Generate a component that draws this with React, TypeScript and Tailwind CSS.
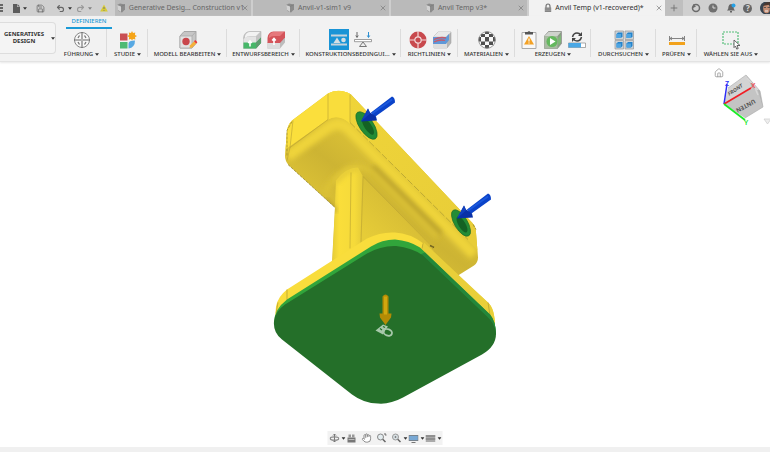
import type { ReactNode } from "react";
import { X, Plus, House, Hand, Undo2, Redo2, Save } from "lucide-react";

function Caret() {
  return (
    <svg viewBox="0 0 6 4" className="h-[3px] w-1 shrink-0" fill="#333" aria-hidden="true">
      <path d="M0 0h6L3 4z" />
    </svg>
  );
}

function CubeSmall() {
  return (
    <svg viewBox="0 0 10 10" className="size-2.5 shrink-0" aria-hidden="true">
      <path d="M1 2l3-1.500 5 1v5L6 9.500 2.500 8z" fill="#8b8b8b" />
      <path d="M1 2l4 1.500v5.500L2 7z" fill="#d2d2d2" />
      <path d="M5 3.500l4-2" stroke="#777" strokeWidth=".6" />
    </svg>
  );
}

function LockSmall() {
  return (
    <svg viewBox="0 0 8 10" className="h-2.5 w-2 shrink-0" fill="none" aria-hidden="true">
      <path d="M2 5V3.500q0-2.500 2-2.500t2 2.500V5" stroke="#777" strokeWidth="1.200" />
      <path d="M.8 4.500h6.400v4.500H.8z" fill="#858585" />
      <path d="M1 6h6M1 7.500h6" stroke="#a5a5a5" strokeWidth=".5" />
    </svg>
  );
}

function Tab({ title, active = false }: { title: string; active?: boolean }) {
  return (
    <div
      className={
        active
          ? "flex min-w-0 flex-1 items-center bg-[#f2f2f2] pr-0.5 pl-1 text-[#303030]"
          : "flex min-w-0 flex-1 items-center border-r-2 border-[#cecece] bg-[#bababa] pr-0.5 pl-1 text-[#666]"
      }
    >
      <button className="flex min-w-0 flex-1 items-center justify-center gap-[3px]">
        {active ? <LockSmall /> : <CubeSmall />}
        <span className="whitespace-nowrap">{title}</span>
      </button>
      <button aria-label={"Schließen: " + title}>
        <X className="size-2 text-[#777]" strokeWidth={2} />
      </button>
    </div>
  );
}

function Ico({ children }: { children: ReactNode }) {
  return (
    <svg viewBox="0 0 20 20" className="size-5 shrink-0" fill="none" aria-hidden="true">
      {children}
    </svg>
  );
}

function GuideIcon() {
  return (
    <Ico>
      <circle cx="10" cy="10" r="7.500" fill="#f8f8f8" stroke="#888" />
      <path d="M10 2v16M2 10h16" stroke="#777" strokeWidth="1.600" />
      <path d="M6 8l1.500-2.500M14 8l-1.500-2.500M6 12l1.500 2.500M14 12l-1.500 2.500" stroke="#777" strokeWidth="1.300" />
      <path d="M10 3v14M3 10h14" stroke="#fff" strokeWidth=".5" />
    </Ico>
  );
}

function StudyIcon() {
  return (
    <Ico>
      <path d="M2 3.500h7.500v7H2z" fill="#c94f53" />
      <path d="M2 12h7.500v6.500H2z" fill="#4fba73" />
      <path d="M10.500 18.500v-5q0-3 6.500-3 0 7-6.500 8z" fill="#58a9e3" />
      <path d="M14 1l1 2 2.200-.6L17 5l2 1-2 1.200.4 2.200L15 9l-1 1.500L13 9l-2.200.4.4-2.200-2-1.200 2-1-.4-2.600L13 3z" fill="#f5a417" />
    </Ico>
  );
}

function EditModelIcon() {
  return (
    <Ico>
      <path d="M2 6l4-4.500h12v12l-4 4.500H2z" fill="#c6c6c6" stroke="#999" strokeWidth=".8" />
      <path d="M2 6h12v12H2z" fill="#e2e2e2" stroke="#aaa" strokeWidth=".8" />
      <path d="M14 6l4-4.500" stroke="#aaa" strokeWidth=".8" />
      <circle cx="8" cy="11.500" r="3.700" fill="#c9474c" />
      <path d="M11.500 18l.6-2.800 4-4 2.200 2.200-4 4z" fill="#f4b13b" />
      <path d="M16 11.200l1.200-1.200 2.200 2.200-1.200 1.200z" fill="#e33" />
    </Ico>
  );
}

function PreserveIcon() {
  return (
    <Ico>
      <path d="M1.500 8q.5-6 6-6.500H19v11L14 18.500H1.500z" fill="#c4c4c4" stroke="#aaa" strokeWidth=".5" />
      <path d="M1.500 9q3-3 6-2.500H14V13H1.500z" fill="#e4e4e4" />
      <path d="M3 6q1.500-4 5-4h10L14 6H8q-3 0-5 2z" fill="#f2f2f2" />
      <path d="M1.500 12.500H14l5-5v5.500l-5 5.500H1.500z" fill="#47b769" />
      <path d="M14 12.500l5-5V13l-5 5.500z" fill="#5f9c70" />
      <path d="M8 16.500v-5M6.200 13L8 11l1.800 2" stroke="#fff" strokeWidth="1.600" />
    </Ico>
  );
}

function ObstacleIcon() {
  return (
    <Ico>
      <path d="M1.500 12H14l5-5v5.500l-5 6H1.500z" fill="#bdbdbd" />
      <path d="M1.500 12H14v6.500H1.500z" fill="#dcdcdc" />
      <path d="M1.500 13V8q.5-6 6-6.500H19v6L14 13z" fill="#d4545a" />
      <path d="M3 6q1.500-4 5-4h10L14 6H8q-3 0-5 2z" fill="#e6787c" />
      <path d="M8 15V8.500M6.200 10.500L8 8.500l1.800 2" stroke="#fff" strokeWidth="1.600" />
    </Ico>
  );
}

function ConstraintIcon() {
  return (
    <span className="flex h-[21px] items-center bg-[#1994d6]">
      <Ico>
        <path d="M2 5.500h16M2 14.500h16" stroke="#c6d3db" strokeWidth="2.200" />
        <path d="M4.500 13L8 7.500l3.500 5.500z" fill="#d5dfe4" />
        <circle cx="14.500" cy="10" r="2.300" fill="#d5dfe4" />
      </Ico>
    </span>
  );
}

function LoadIcon() {
  return (
    <Ico>
      <path d="M1.500 9.500h17v2.200h-17z" fill="#fff" stroke="#888" strokeWidth=".8" />
      <path d="M10 12l-3.500 4.500h7z" fill="#eee" stroke="#777" />
      <path d="M4 2v5M2.800 5.500L4 7.500l1.200-2" stroke="#666" />
      <path d="M15.500 2v5M14.300 5.500l1.200 2 1.200-2" stroke="#2b8fd2" />
    </Ico>
  );
}

function TargetIcon() {
  return (
    <Ico>
      <circle cx="10" cy="10" r="8.500" fill="#c8494d" />
      <path d="M10 1v6M10 13v6M1 10h6M13 10h6" stroke="#f3dada" strokeWidth="1.200" />
      <circle cx="10" cy="10" r="3.200" fill="#c8494d" stroke="#f3dada" strokeWidth="1.200" />
    </Ico>
  );
}

function MethodIcon() {
  return (
    <Ico>
      <path d="M2 6l4-4h13v11l-4 5H2z" fill="#b5b5b5" stroke="#999" strokeWidth=".5" />
      <path d="M2 6h13v12H2z" fill="#dedede" />
      <path d="M2 6l4-4h13l-4 4z" fill="#e9e9e9" />
      <path d="M1 7h13l3-3v6l-3 4H1z" fill="#5f98d8" />
      <path d="M2 9.500q6-3 12-1.500M2 12q6-3 11-1.500" stroke="#c65a6a" strokeWidth="1.300" />
    </Ico>
  );
}

function MaterialIcon() {
  return (
    <Ico>
      <clipPath id="ball"><circle cx="10" cy="10" r="8.500" /></clipPath>
      <circle cx="10" cy="10" r="8.500" fill="#f7f7f7" />
      <g clipPath="url(#ball)" fill="#505050">
        <path d="M8 0h4v4H8zM4 4h4v3H4zM12 4h4v3h-4zM0 7h4v4.500H0zM8 7h4v4.500H8zM16 7h4v4.500h-4zM4 11.500h4V15H4zM12 11.500h4V15h-4zM8 15h4v4H8zM0 15h4v4H0zM16 15h4v4h-4zM0 1h4v3H0zM16 1h4v3h-4z" />
      </g>
      <circle cx="10" cy="10" r="8.300" stroke="#888" strokeWidth=".8" />
    </Ico>
  );
}

function CheckIcon() {
  return (
    <Ico>
      <path d="M3 2.500h14v16H3z" fill="#f8f8f8" stroke="#aaa" />
      <path d="M6 2h2.500L10 1l1.500 1H14v2.500H6z" fill="#555" />
      <path d="M10 6l5 8.500H5z" fill="#f3a125" />
      <path d="M10 8.500v3M10 12.500v1" stroke="#fff" strokeWidth="1.200" />
    </Ico>
  );
}

function GenerateIcon() {
  return (
    <Ico>
      <path d="M1.500 6l4-4.500h13v12l-4 5h-13z" fill="#8a9c84" stroke="#858585" strokeWidth=".6" />
      <path d="M1.500 6h13v12.500h-13z" fill="#a9bba2" />
      <path d="M5.500 2h12.500l-3.500 4h-13z" fill="#cfd3cd" />
      <path d="M15 8l3-3v7l-3 4z" fill="#7fb878" />
      <circle cx="9" cy="11.500" r="5.500" fill="#64b85e" />
      <path d="M7 8l5.500 3.500L7 15z" fill="#fff" />
    </Ico>
  );
}

function StatusIcon() {
  return (
    <Ico>
      <path d="M5.500 7q1-4 4.500-4 2.500 0 3.500 2M14.500 7q-1 4-4.500 4-2.500 0-3.500-2" stroke="#444" strokeWidth="1.500" />
      <path d="M15 2v4h-4zM5 12V8h4z" fill="#444" />
      <path d="M1.500 13h17v4.500h-17z" fill="#fff" stroke="#888" strokeWidth=".7" />
      <path d="M1.500 13H14v4.500H1.500z" fill="#4ba8e5" />
    </Ico>
  );
}

function ExploreIcon() {
  return (
    <Ico>
      {[1, 11].map((x) =>
        [1, 10.5].map((y) => (
          <g key={x + "-" + y} transform={"translate(" + x + " " + y + ")"}>
            <path d="M0 0h8.500v8.500H0z" fill="#ccd2d6" stroke="#999" strokeWidth=".7" />
            <path d="M1.500 3L3 1.500h4.500v4L6 7H1.500z" fill="#2584cc" />
            <path d="M1.500 3H6v4H1.500z" fill="#4ea5e2" />
          </g>
        )),
      )}
    </Ico>
  );
}

function MeasureIcon() {
  return (
    <Ico>
      <path d="M2.500 6v5M17.500 6v5M3 8.500h14M5 7L3 8.500 5 10M15 7l2 1.500L15 10" stroke="#777" strokeWidth=".9" />
      <path d="M2 12h16v3H2z" fill="#f2a21c" />
    </Ico>
  );
}

function SelectIcon() {
  return (
    <Ico>
      <path d="M2 2h15v12H2z" stroke="#55bd79" strokeWidth="1.200" strokeDasharray="2 1" />
      <path d="M13 10l6 5.500h-3l1.200 3-1.500.6-1.200-3-1.500 1.500z" fill="#fff" stroke="#555" strokeWidth=".9" />
    </Ico>
  );
}

const groups: { label: string; icons: ReactNode[] }[] = [
  { label: "FÜHRUNG", icons: [<GuideIcon />] },
  { label: "STUDIE", icons: [<StudyIcon />] },
  { label: "MODELL BEARBEITEN", icons: [<EditModelIcon />] },
  { label: "ENTWURFSBEREICH", icons: [<PreserveIcon />, <ObstacleIcon />] },
  { label: "KONSTRUKTIONSBEDINGUI...", icons: [<ConstraintIcon />, <LoadIcon />] },
  { label: "RICHTLINIEN", icons: [<TargetIcon />, <MethodIcon />] },
  { label: "MATERIALIEN", icons: [<MaterialIcon />] },
  { label: "ERZEUGEN", icons: [<CheckIcon />, <GenerateIcon />, <StatusIcon />] },
  { label: "DURCHSUCHEN", icons: [<ExploreIcon />] },
  { label: "PRÜFEN", icons: [<MeasureIcon />] },
  { label: "WÄHLEN SIE AUS", icons: [<SelectIcon />] },
];

function TitleBar() {
  return (
    <header className="flex h-4 bg-[#d0d0d0] text-[7px] leading-4">
      <div className="flex w-[115px] shrink-0 items-center text-[#666]">
        <button aria-label="Datengruppe" className="w-3">
          <svg viewBox="0 0 4 8" className="h-2 w-1" fill="#666"><path d="M0 0h3v2H0zM0 3h3v2H0zM0 6h3v2H0z" /></svg>
        </button>
        <button aria-label="Datei" className="flex w-6 items-center gap-[3px]">
          <svg viewBox="0 0 8 9" className="h-[9px] w-2" fill="#5c5c5c"><path d="M1 0h4v3h3v6H1z" /><path d="M5.500 0L8 2.500H5.500z" /></svg>
          <Caret />
        </button>
        <button aria-label="Speichern" className="w-5"><Save className="size-[9px]" strokeWidth={2} /></button>
        <button aria-label="Rückgängig" className="flex w-5 items-center gap-[3px]"><Undo2 className="size-[9px]" strokeWidth={3} /><Caret /></button>
        <button aria-label="Wiederholen" className="flex w-6 items-center gap-[3px] opacity-50"><Redo2 className="size-[9px]" strokeWidth={3} /><Caret /></button>
        <button aria-label="Warnung">
          <svg viewBox="0 0 8 8" className="size-2"><path d="M4 .5l3.800 7H.2z" fill="#d8cb35" /><path d="M4 3v2M4 6v.8" stroke="#777" /></svg>
        </button>
      </div>
      <nav className="flex min-w-0 flex-1">
        <Tab title="Generative Desig... Construction v1" />
        <Tab title="Anvil-v1-sim1 v9" />
        <Tab title="Anvil Temp v3*" />
        <Tab title="Anvil Temp (v1-recovered)*" active />
      </nav>
      <div className="flex w-[105px] shrink-0 items-center justify-between text-[#6d6d6d]">
        <button aria-label="Neuer Tab" className="flex h-4 w-[18px] items-center justify-center bg-[#bfbfbf]"><Plus className="size-2.5" strokeWidth={2} /></button>
        <button aria-label="Erweiterungen">
          <svg viewBox="0 0 10 10" className="size-2.5" fill="none"><circle cx="5" cy="5" r="3.500" stroke="#6b6b6b" strokeWidth="1.500" /><path d="M2 1l3 2.500L2 5z" fill="#6b6b6b" /></svg>
        </button>
        <button aria-label="Auftragsstatus">
          <svg viewBox="0 0 10 10" className="size-2.5"><circle cx="5" cy="5" r="4.500" fill="#707070" /><path d="M5 2.500V5h2.500" stroke="#ddd" fill="none" /></svg>
        </button>
        <button aria-label="Benachrichtigungen">
          <svg viewBox="0 0 10 10" className="size-2.5"><path d="M1 7.500q1.500-1 1.500-4Q3 1 5 1t2.500 2.500q0 3 1.500 4zM4 8h2v1.500H4z" fill="#656565" /><circle cx="7.500" cy="2.500" r="2" fill="#25a1e6" /></svg>
        </button>
        <button aria-label="Hilfe" className="flex size-[9px] items-center justify-center rounded-full bg-[#666] text-[8px] leading-none font-bold text-[#ddd]">?</button>
        <button aria-label="Profil">
          <svg viewBox="0 0 10 12" className="h-3 w-2.5"><path d="M4 0h6v12H4Q0 10 0 6t4-6z" fill="#384450" /><ellipse cx="6.500" cy="6.500" rx="3.300" ry="4.800" fill="#c58e74" /><path d="M3 4q1-4 7-4v2.500z" fill="#4a3830" /><path d="M4 5.500h2M7.500 5.500H10" stroke="#444" strokeWidth=".8" /><path d="M5 9h3" stroke="#eee" /></svg>
        </button>
      </div>
    </header>
  );
}

function Ribbon() {
  return (
    <div className="flex h-[46px] border-b border-[#e3e3e3] bg-[#f2f2f2] text-[#333] shadow-[0_1px_2px_#e8e8e8]">
      <button className="mt-1.5 flex h-8 w-14 shrink-0 items-center justify-center gap-[3px] rounded-r-sm border border-l-0 border-[#ddd] bg-[#f4f4f4] text-[6px] leading-[7px] font-bold">
        <span>GENERATIVES DESIGN</span>
        <Caret />
      </button>
      <div className="flex min-w-0 flex-1 flex-col">
        <div className="flex h-[13px] shrink-0 pl-2.5">
          <button className="w-[46px] border-b-2 border-[#1b9ad6] text-[6px] leading-[11px] font-medium text-[#1b9ad6]">DEFINIEREN</button>
        </div>
        <div className="grid grid-cols-[51fr_41fr_79fr_73fr_101fr_57fr_57fr_76fr_65fr_41fr_68fr_5fr]">
          {groups.map((g, i) => (
            <div
              key={g.label}
              className={
                "flex min-w-0 flex-col items-center " + (i < groups.length - 1 ? "bg-[linear-gradient(#dcdcdc,#dcdcdc)] bg-[length:1px_28px] bg-right-top bg-no-repeat" : "")
              }
            >
              <div className="flex h-[21px] items-center gap-1">
                {g.icons.map((icon, k) => (
                  <button key={k} aria-label={g.label + " " + (k + 1)} className="block">{icon}</button>
                ))}
              </div>
              <button className="flex items-center gap-0.5 text-[6px] leading-[9px] font-medium whitespace-nowrap">
                {g.label}
                <Caret />
              </button>
            </div>
          ))}
        </div>
      </div>
    </div>
  );
}

function LoadArrow({ x, y }: { x: number; y: number }) {
  return (
    <g transform={"translate(" + x + " " + y + ")"}>
      <path d="M10-9L31-25Q34-24 34-19L13-4z" fill="#0b43c9" />
      <path d="M11-8L31-22" stroke="#1a58dc" strokeWidth="2" />
      <path d="M0 0L7-13l2 4 6 4 1 4z" fill="#0931a8" />
      <path d="M0 0L7-13l2 5z" fill="#1140bd" />
    </g>
  );
}

function Model() {
  return (
    <svg viewBox="0 62 770 384" className="absolute inset-0 size-full" role="img" aria-label="Anvil Modell">
      <defs>
        <linearGradient id="under" x1="300" y1="190" x2="350" y2="125" gradientUnits="userSpaceOnUse">
          <stop offset="0" stopColor="#dcc236" /><stop offset=".5" stopColor="#cdb433" /><stop offset="1" stopColor="#dcc236" />
        </linearGradient>
        <linearGradient id="post" x1="333" x2="364" y1="0" y2="0" gradientUnits="userSpaceOnUse">
          <stop offset="0" stopColor="#e8ce38" /><stop offset=".2" stopColor="#fade3a" /><stop offset=".7" stopColor="#f5da3a" /><stop offset="1" stopColor="#e2c838" />
        </linearGradient>
        <linearGradient id="side" x1="350" x2="475" y1="100" y2="240" gradientUnits="userSpaceOnUse">
          <stop offset="0" stopColor="#efd439" /><stop offset="1" stopColor="#e8cd38" />
        </linearGradient>
        <linearGradient id="web" x1="365" x2="400" y1="235" y2="200" gradientUnits="userSpaceOnUse">
          <stop offset="0" stopColor="#e6cc38" /><stop offset="1" stopColor="#d6bc35" />
        </linearGradient>
        <filter id="soft" x="-20%" y="-20%" width="140%" height="140%"><feGaussianBlur stdDeviation="2.500" /></filter>
        <clipPath id="body">
          <path d="M285 155L287 130Q288 124 292 120L328 93Q339 87 351 94L472 222Q476 226 476 232L478 257Q478 262 474 265L458 275 332 262 335 207 289 165Q285 161 285 155z" />
        </clipPath>
      </defs>
      <g clipPath="url(#body)">
        <path d="M280 85h205v195H280z" fill="url(#under)" />
        <path d="M287 156L328 127Q340 119 349 129L474 254" fill="none" stroke="#efd43a" strokeWidth="11" filter="url(#soft)" />
        <path d="M284 150L328 119Q339 113 350 123V85H280z" fill="#fbdf3c" />
        <path d="M350 85L485 225V257L470 242 350 123z" fill="url(#side)" />
        <path d="M328 119Q339 112 350 123V90H328z" fill="#f9dd3c" />
        <path d="M372 167L440 234" stroke="#b9a02c" strokeWidth="7" filter="url(#soft)" />
        <path d="M325 193Q334 172 356 165L372 171 438 237" fill="none" stroke="#dcc236" strokeWidth="6" filter="url(#soft)" />
        <path d="M336 180Q346 167 358 167L363 176V268H332z" fill="url(#post)" />
        <path d="M336 182Q345 168 359 168" fill="none" stroke="#e3c938" strokeWidth="5" filter="url(#soft)" />
        <path d="M363 176L434 247 430 270H359z" fill="url(#web)" />
        <path d="M328 93V119M350 94V122M290 147L287 160M293 120L290 147 328 119M363 176L433 247M351 172L350 248M363 176L361 242" fill="none" stroke="#b8a132" strokeWidth=".6" />
        <path d="M350 122L468 239" stroke="#8d8030" strokeWidth=".5" strokeDasharray="7 2" />
        <path d="M325 199L336 211" stroke="#a99029" strokeWidth="3" filter="url(#soft)" />
        <path d="M430 245l4 2" stroke="#6d6020" strokeWidth="1.500" />
      </g>
      <g fill="none" stroke="#8f8028" strokeWidth=".7" strokeDasharray="3 1">
        <path d="M288 164L335 207M287 155V130L292 121M473 224L476 229" />
      </g>
      <g fill="#238c36" stroke="#176825" strokeWidth=".6">
        <ellipse cx="366.500" cy="125" rx="7" ry="16" transform="rotate(-34 366.500 125)" />
        <ellipse cx="461" cy="222.500" rx="6.500" ry="15" transform="rotate(-31 461 222.500)" />
      </g>
      <g fill="#146224">
        <ellipse cx="368" cy="126" rx="3.500" ry="9.500" transform="rotate(-34 368 126)" />
        <ellipse cx="462" cy="224" rx="3.500" ry="9" transform="rotate(-31 462 224)" />
      </g>
      <LoadArrow x={361} y={121} />
      <LoadArrow x={457} y={218} />
      <path d="M275 318L276 306Q278 296 287 289L367 238Q381 231 395 232 410 233 422 242L488 302Q495 308 495 327L480 340 285 330z" fill="#f9dd3c" />
      <path d="M424 242L488 302Q495 308 495 327L485 316 420 254z" fill="#e9cf39" />
      <path d="M287 289V300M423 243L422 248M488 302L490 315M278 302L276 313M432 246l1 3" stroke="#b09a30" strokeWidth=".7" />
      <path d="M274 322Q274 309 287 299L371 246Q382 239 395 239 409 240 420 247L490 314Q496 321 496 334L480 345 280 335z" fill="#31a53b" />
      <path d="M425 252L490 314Q496 321 496 334L485 320 420 254z" fill="#23873a" />
      <path d="M285 304L367 253Q381 245 396 245.500 412 247 423 255L487 316Q495 323 496 333 496 346 482 354L403 397Q390 404 378 403 364 403 352 394L282 339Q273 332 274 321 275 311 285 304z" fill="#246f29" />
      <path d="M382.500 296Q385.500 292 388.500 296V313H391.500L391 317 385.500 324.500 380 317 379.500 313H382.500z" fill="#b38b05" />
      <path d="M384 296H387V314H384z" fill="#d0a70e" />
      <g transform="translate(384 329)" fill="#a7c8aa">
        <path d="M-8.500 1L-1-5 4-3 1 1-1 5z" />
        <path d="M-4-1l2 1.500M-1-3l2 1" stroke="#246f29" strokeWidth="1.200" />
        <ellipse cx="3.800" cy="3" rx="4.300" ry="3.200" transform="rotate(20 4 3)" fill="none" stroke="#a7c8aa" strokeWidth="1.800" />
      </g>
    </svg>
  );
}

function ViewCube() {
  return (
    <div className="absolute top-0 right-0 h-[66px] w-[60px]">
      <button aria-label="Ausgangsansicht" className="absolute top-1.5 left-1"><House className="size-2.5 text-[#999]" strokeWidth={2} /></button>
      <svg viewBox="710 62 60 66" className="size-full" role="img" aria-label="Ansichtswürfel">
        <path d="M728 88L746 75 752 88 724 104z" fill="#d3d3d3" />
        <path d="M746 75L760 91 763 107 752 88z" fill="#b5b5b5" />
        <path d="M724 104L752 88 758 91 763 107 745 118z" fill="#c4c4c4" />
        <path d="M728 88L746 75 760 91 763 107 745 118" fill="none" stroke="#aaa" strokeWidth=".6" />
        <path d="M747 78l11 12M753 83l5 12" stroke="#d8d8d8" strokeWidth="1.500" />
        <text transform="translate(729 96) rotate(-34) skewX(-12)" fontSize="5" fontWeight="700" fill="#555">FRONT</text>
        <text transform="translate(754 99) rotate(151)" fontSize="6" fontWeight="700" fill="#555">UNTEN</text>
        <path d="M724 104L727 84" stroke="#2d2df5" strokeWidth="1.500" />
        <path d="M724 104L751 88" stroke="#f01d25" strokeWidth="1.700" />
        <path d="M724 104L745 120" stroke="#19ec25" strokeWidth="1.700" />
        <text x="725" y="86" fontSize="7" fontWeight="600" fill="#2d35f5">Z</text>
        <text x="751" y="88" fontSize="7" fontWeight="600" fill="#f14a50">X</text>
        <text x="744" y="125" fontSize="7" fontWeight="600" fill="#1be82a">Y</text>
        <path d="M764 119h7l-3.500 5z" fill="#eee" stroke="#ccc" strokeWidth=".7" />
      </svg>
    </div>
  );
}

const navButton = "flex w-[17px] items-center gap-0.5";

function NavBar() {
  return (
    <div className="absolute bottom-0.5 left-1/2 flex h-[14px] -translate-x-1/2 items-center bg-[#f2f2f2] pl-0.5 text-[#777]">
      <button aria-label="Orbit" className={navButton}>
        <svg viewBox="0 0 10 10" className="size-2.5" fill="none"><path d="M5 1v8M3.500 2.500L5 1l1.500 1.500M3.500 7.500L5 9l1.500-1.500" stroke="#777" /><ellipse cx="5" cy="5.500" rx="4.300" ry="1.700" stroke="#888" strokeWidth="1.200" /></svg>
        <Caret />
      </button>
      <button aria-label="Ausrichten" className="w-[15px]">
        <svg viewBox="0 0 10 10" className="size-2.5"><path d="M1 4.500h8v5H1z" fill="#777" /><path d="M2 1.500h2.500v3H2zM5.500 1.500H8v3H5.500z" fill="#999" /><path d="M2 6.500h6" stroke="#bbb" /></svg>
      </button>
      <button aria-label="Schwenken" className="w-[15px]"><Hand className="size-2.5 fill-white" strokeWidth={2} /></button>
      <button aria-label="Zoom" className="w-[15px]">
        <svg viewBox="0 0 10 10" className="size-2.5" fill="none"><circle cx="4" cy="4" r="3" fill="#e4edf0" stroke="#888" /><path d="M6.200 6.200L9 9" stroke="#666" strokeWidth="1.500" /><path d="M7.500 1h2v2" stroke="#666" /></svg>
      </button>
      <button aria-label="Einpassen" className={navButton}>
        <svg viewBox="0 0 10 10" className="size-2.5" fill="none"><circle cx="4" cy="4" r="3" fill="#d7e0e4" stroke="#999" /><path d="M3 4h2M4 3v2" stroke="#777" strokeWidth=".8" /><path d="M6.200 6.200L9 9" stroke="#666" strokeWidth="1.500" /></svg>
        <Caret />
      </button>
      <button aria-label="Anzeige" className={navButton}>
        <svg viewBox="0 0 10 9" className="h-[9px] w-2.5"><path d="M0 1h10v6H0z" fill="#777" /><path d="M.7 1.700h8.600v4.600H.7z" fill="#78a8d4" /><path d="M3 8h4v1H3z" fill="#777" /></svg><Caret />
      </button>
      <button aria-label="Raster" className={navButton}>
        <svg viewBox="0 0 10 9" className="h-[9px] w-2.5"><path d="M0 1h10v7H0z" fill="#aaa" /><path d="M0 2h10M0 5h10" stroke="#777" /></svg><Caret />
      </button>
    </div>
  );
}

export default function App() {
  return (
    <div className="flex h-screen flex-col overflow-hidden bg-white font-['Noto_Sans',sans-serif]">
      <TitleBar />
      <Ribbon />
      <main className="relative min-h-0 flex-1">
        <Model />
        <ViewCube />
        <NavBar />
      </main>
      <footer className="h-[5px] shrink-0 overflow-hidden bg-[#f0f0f0] pl-1 text-[6px] leading-[14px] text-[#777]">KOMMENTARE</footer>
    </div>
  );
}
